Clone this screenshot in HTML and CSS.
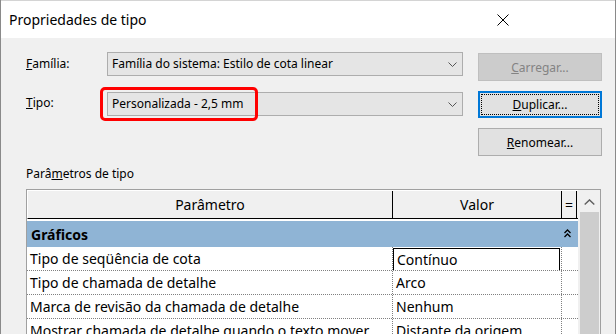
FILE: index.html
```html
<!DOCTYPE html>
<html lang="pt">
<head>
  <meta charset="UTF-8" />
  <title>Propriedades de tipo</title>
  <link rel="stylesheet" href="styles.css">
</head>
<body>
  <div class="dialog">
    <div class="titlebar">
      <span class="title">Propriedades de tipo</span>
      <svg class="close" width="12" height="12" viewBox="0 0 12 12">
        <path d="M0.5 0.5 L11.5 11.5 M11.5 0.5 L0.5 11.5" stroke="#000" stroke-width="1" fill="none"/>
      </svg>
    </div>

    <div class="content">
      <div class="form-row first">
        <label class="label"><u>F</u>amília:</label>
        <div class="combo">
          <span>Família do sistema: Estilo de cota linear</span>
          <svg class="chev" width="9" height="5" viewBox="0 0 9 5"><path d="M0.5 0.5 L4.5 4.5 L8.5 0.5" stroke="#555" fill="none"/></svg>
        </div>
        <button class="btn disabled"><u>C</u>arregar...</button>
      </div>

      <div class="form-row second">
        <label class="label"><u>T</u>ipo:</label>
        <div class="combo">
          <span>Personalizada - 2,5 mm</span>
          <svg class="chev" width="9" height="5" viewBox="0 0 9 5"><path d="M0.5 0.5 L4.5 4.5 L8.5 0.5" stroke="#555" fill="none"/></svg>
          <div class="highlight"></div>
        </div>
        <button class="btn focused"><span class="focus-ring"><u>D</u>uplicar...</span></button>
      </div>

      <div class="form-row third">
        <button class="btn"><u>R</u>enomear...</button>
      </div>

      <div class="section-label">Parâ<u>m</u>etros de tipo</div>

      <div class="grid-frame">
        <div class="grid">
          <div class="head">
            <div class="hcell c-param">Parâmetro</div>
            <div class="hcell c-value">Valor</div>
            <div class="hcell c-eq">=</div>
          </div>
          <div class="group">
            <span>Gráficos</span>
            <svg class="collapse" width="7" height="9" viewBox="0 0 7 9">
              <path d="M0.5 4 L3.5 1 L6.5 4 M0.5 8 L3.5 5 L6.5 8" stroke="#000" stroke-width="1.3" fill="none"/>
            </svg>
          </div>
          <div class="row">
            <div class="cell c-param">Tipo de seqüência de cota</div>
            <div class="cell c-value"><span class="edit">Contínuo</span></div>
            <div class="cell c-eq"></div>
          </div>
          <div class="row">
            <div class="cell c-param">Tipo de chamada de detalhe</div>
            <div class="cell c-value">Arco</div>
            <div class="cell c-eq"></div>
          </div>
          <div class="row">
            <div class="cell c-param">Marca de revisão da chamada de detalhe</div>
            <div class="cell c-value">Nenhum</div>
            <div class="cell c-eq"></div>
          </div>
          <div class="row">
            <div class="cell c-param">Mostrar chamada de detalhe quando o texto mover</div>
            <div class="cell c-value">Distante da origem</div>
            <div class="cell c-eq"></div>
          </div>
        </div>
        <div class="scrollbar">
          <svg class="arrow" width="11" height="6" viewBox="0 0 11 6"><path d="M0.7 5.5 L5.5 0.9 L10.3 5.5" stroke="#606060" stroke-width="1.4" fill="none"/></svg>
          <div class="thumb"></div>
        </div>
      </div>
    </div>
  </div>
</body>
</html>
```

FILE: styles.css
```css
body, html {
  margin: 0;
  padding: 0;
  width: 616px;
  height: 334px;
  overflow: hidden;
  font-family: 'Noto Sans', 'Open Sans', sans-serif;
  background: #f0f0f0;
}

.dialog {
  width: 614px;
  height: 334px;
  overflow: hidden;
  border-left: 1px solid #8a8a8a;
  border-right: 1px solid #8a8a8a;
  background: #f0f0f0;
}

.titlebar {
  height: 37px;
  border-top: 1px solid #d4d4d4;
  background: #fff;
  display: flex;
  align-items: center;
  justify-content: space-between;
  padding: 0 106px 0 8px;
}
.title {
  font-size: 14px;
  color: #000;
  margin-top: -1px;
}

.content {
  padding: 14px 0 0 25px;
  font-size: 12px;
  color: #000;
}

.form-row {
  display: flex;
  align-items: flex-start;
}
.label {
  width: 81px;
  line-height: 24px;
}
.combo {
  position: relative;
  width: 345px;
  height: 22px;
  border: 1px solid #adadad;
  background: #e5e5e5;
  display: flex;
  align-items: center;
  justify-content: space-between;
  padding: 0 5px 0 4px;
  margin-right: 15px;
}
.combo span {
  margin-top: -1px;
}

.highlight {
  position: absolute;
  left: -8px;
  top: -6px;
  width: 152px;
  height: 28px;
  border: 3px solid #ff0000;
  border-radius: 5px;
}

.btn {
  width: 124px;
  height: 28px;
  font-family: inherit;
  font-size: 12px;
  color: #000;
  background: #e1e1e1;
  border: 1px solid #adadad;
  padding: 0;
  margin-top: 1px;
}
.btn.disabled {
  background: #cccccc;
  border-color: #bfbfbf;
  color: #838383;
}
.second {
  margin-top: 10px;
}
.second .combo {
  margin-top: 1px;
}
.btn.focused {
  border: 2px solid #0078d7;
  margin-top: 0;
  height: 27px;
  padding: 1px;
}
.focus-ring {
  display: flex;
  align-items: center;
  justify-content: center;
  height: 100%;
  outline: 1px dotted #000;
  outline-offset: -1px;
}
.third {
  margin-top: 10px;
  padding-left: 452px;
}
.third .btn {
  margin-top: 0;
}

.section-label {
  margin-top: 10px;
  line-height: 16px;
}

.grid-frame {
  margin-top: 7px;
  width: 573px;
  height: 150px;
  border: 1px solid #a0a0a0;
  border-bottom: none;
  display: flex;
  background: #fff;
}
.grid {
  width: 551px;
  font-size: 14px;
}
.head {
  display: flex;
  height: 27px;
  background: #f0f0f0;
  border-top: 1px solid #fff;
  border-bottom: 1px solid #000;
  border-left: 1px solid #fff;
}
.hcell {
  display: flex;
  align-items: center;
  justify-content: center;
  border-right: 1px solid #000;
  box-sizing: border-box;
}
.c-param { width: 366px; }
.c-value { width: 169px; }
.c-eq { width: 15px; }
.head .c-param { width: 365px; }

.group {
  margin-top: 2px;
  height: 26px;
  background: #8fb4d5;
  display: flex;
  align-items: center;
  justify-content: space-between;
  padding: 0 7px 0 4px;
  font-weight: bold;
}
.collapse {
  margin-top: -2px;
}

.row {
  display: flex;
  height: 24px;
  border-bottom: 1px dotted #808080;
  box-sizing: border-box;
}
.cell {
  display: flex;
  align-items: center;
  padding-left: 3px;
  border-right: 1px dotted #808080;
  box-sizing: border-box;
  white-space: nowrap;
  overflow: hidden;
}
.cell.c-eq {
  border-right: none;
}
.cell.c-value {
  padding-left: 3px;
}
.row:first-of-type .c-value,
.cell.c-value.has-edit {
  padding-left: 0;
}
.edit {
  display: flex;
  align-items: center;
  width: 167px;
  height: 23px;
  margin-top: 1px;
  margin-left: -3px;
  border: 1px solid #000;
  padding-left: 3px;
  box-sizing: border-box;
}

.scrollbar {
  width: 22px;
  background: #f0f0f0;
  display: flex;
  flex-direction: column;
  align-items: center;
}
.arrow {
  margin-top: 9px;
}
.thumb {
  margin-top: 7px;
  width: 19px;
  flex: 1;
  background: #cdcdcd;
}
```
